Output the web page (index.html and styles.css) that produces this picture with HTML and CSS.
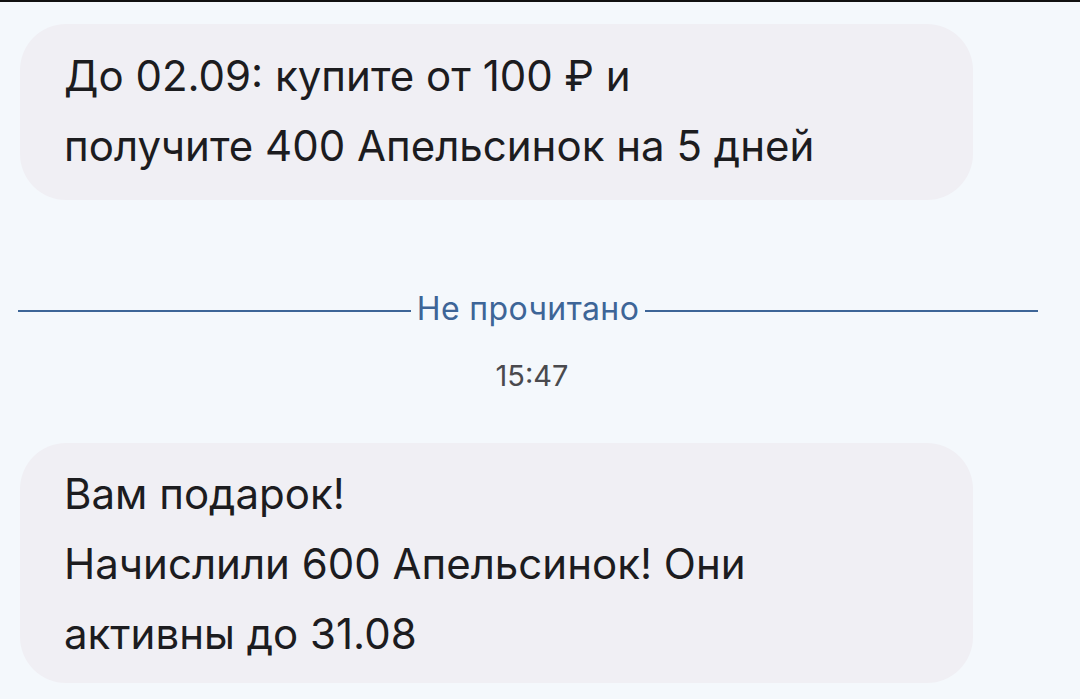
FILE: index.html
```html
<!DOCTYPE html>
<html lang="ru">
<head>
<meta charset="utf-8">
<link rel="stylesheet" href="styles.css">
</head>
<body>
<div class="topbar"></div>
<main class="chat">
  <div class="bubble b1">
    <p>До 02.09: купите от 100 ₽ и<br>получите 400 Апельсинок на 5 дней</p>
  </div>
  <div class="divider">
    <span class="line"></span>
    <span class="label">Не прочитано</span>
    <span class="line"></span>
  </div>
  <div class="time">15:47</div>
  <div class="bubble b2">
    <p>Вам подарок!<br>Начислили 600 Апельсинок! Они<br>активны до 31.08</p>
  </div>
</main>
</body>
</html>
```

FILE: styles.css
```css
html, body {
  margin: 0;
  padding: 0;
  background: #f4f8fc;
}
body {
  width: 1080px;
  height: 699px;
  overflow: hidden;
  font-family: "Inter", "Roboto", sans-serif;
}
.topbar {
  height: 2px;
  background: #111;
}
.chat {
  display: flex;
  flex-direction: column;
  padding: 22px 0 0 20px;
}
.bubble {
  width: 953px;
  box-sizing: border-box;
  background: #f0eff4;
  border-radius: 46px;
  padding: 17px 44px 19px 44px;
}
.bubble p {
  margin: 0;
  font-size: 42px;
  line-height: 70px;
  color: #1c1c1f;
  letter-spacing: 0;
}
.divider {
  display: flex;
  align-items: center;
  margin-top: 91px;
  margin-left: -2px;
  width: 1020px;
  gap: 6px;
}
.divider .line {
  flex: 1;
  height: 2px;
  margin-top: 4px;
  background: #3d6597;
}
.divider .label {
  font-size: 32px;
  letter-spacing: 0.4px;
  color: #3d6597;
  line-height: 36px;
}
.time {
  font-size: 29px;
  color: #4a4a4e;
  text-align: center;
  width: 1064px;
  margin-left: -20px;
  margin-top: 31px;
  line-height: 36px;
}
.b2 {
  margin-top: 49px;
  padding-top: 16px;
  padding-bottom: 14px;
}
```
